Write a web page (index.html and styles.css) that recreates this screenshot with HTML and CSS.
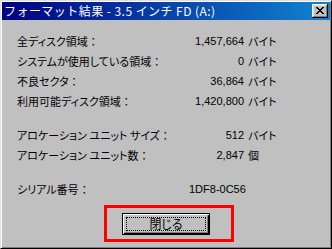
FILE: index.html
```html
<!DOCTYPE html>
<html lang="ja">
<head>
    <meta charset="UTF-8">
    <title>フォーマット結果</title>
    <link rel="stylesheet" href="styles.css">
</head>
<body>
    <div class="window">
        <div class="titlebar">
            <span class="title">フォーマット結果 - 3.5 インチ FD (A:)</span>
            <button class="close-btn" aria-label="閉じる">
                <svg width="8" height="7" viewBox="0 0 8 7">
                    <path d="M0 0h2v1h1v1h2v-1h1v-1h2v1h-1v1h-1v1h-1v1h1v1h1v1h1v1h-2v-1h-1v-1h-2v1h-1v1h-2v-1h1v-1h1v-1h1v-1h-1v-1h-1z" fill="#000"/>
                </svg>
            </button>
        </div>

        <div class="content">
            <div class="info-grid">
                <span class="label">全ディスク領域<span class="colon">：</span></span>
                <span class="num">1,457,664</span>
                <span class="unit">バイト</span>

                <span class="label">システムが使用している領域<span class="colon">：</span></span>
                <span class="num">0</span>
                <span class="unit">バイト</span>

                <span class="label">不良セクタ<span class="colon">：</span></span>
                <span class="num">36,864</span>
                <span class="unit">バイト</span>

                <span class="label">利用可能ディスク領域<span class="colon">：</span></span>
                <span class="num">1,420,800</span>
                <span class="unit">バイト</span>

                <span class="spacer"></span>

                <span class="label">アロケーション ユニット サイズ<span class="colon">：</span></span>
                <span class="num">512</span>
                <span class="unit">バイト</span>

                <span class="label">アロケーション ユニット数<span class="colon">：</span></span>
                <span class="num">2,847</span>
                <span class="unit">個</span>

                <span class="spacer"></span>

                <span class="label">シリアル番号<span class="colon">：</span></span>
                <span class="serial">1DF8-0C56</span>
            </div>

            <div class="footer">
                <div class="highlight">
                    <button class="ok-btn"><span class="focus">閉じる</span></button>
                </div>
            </div>
        </div>
    </div>
</body>
</html>
```

FILE: styles.css
```css
body {
    margin: 0;
    background: #c0c0c0;
    font-family: "Noto Sans CJK JP", "Liberation Sans", sans-serif;
    font-size: 11px;
    font-feature-settings: "palt";
    color: #000;
}

.window {
    width: 332px;
    height: 249px;
    box-sizing: border-box;
    background: #c0c0c0;
    border: 1px solid;
    border-color: #dfdfdf #000 #000 #dfdfdf;
    box-shadow: inset 1px 1px #fff, inset -1px -1px #808080;
    padding: 1px;
    display: flex;
    flex-direction: column;
    overflow: hidden;
}

.titlebar {
    height: 18px;
    flex: none;
    background: linear-gradient(to right, #000080, #1084d0);
    display: flex;
    align-items: center;
    justify-content: space-between;
    padding: 0 2px 0 2px;
}

.title {
    color: #fff;
    font-size: 12px;
    font-feature-settings: normal;
    line-height: 18px;
    white-space: nowrap;
    letter-spacing: 0.45px;
}

.close-btn {
    width: 16px;
    height: 14px;
    padding: 0;
    border: none;
    background: #c0c0c0;
    box-shadow: inset -1px -1px #000, inset 1px 1px #fff, inset -2px -2px #808080, inset 2px 2px #dfdfdf;
    display: flex;
    align-items: center;
    justify-content: center;
}

.close-btn svg {
    display: block;
    margin: 0 1px 1px 0;
}

.content {
    flex: 1;
    padding: 11px 0 0 15px;
    display: flex;
    flex-direction: column;
}

.info-grid {
    display: grid;
    grid-template-columns: 150px 73px auto;
    grid-template-rows: repeat(4, 20px) 14px 20px 20px 14px 20px;
    column-gap: 4px;
    align-items: center;
    white-space: nowrap;
}

.colon {
    font-feature-settings: normal;
}

.spacer {
    grid-column: 1 / 4;
}

.num {
    text-align: right;
    font-family: "Liberation Sans", sans-serif;
}

.serial {
    grid-column: 2 / 4;
    padding-left: 18px;
    font-family: "Liberation Sans", sans-serif;
}

.footer {
    display: flex;
    padding: 6px 0 0 87px;
}

.highlight {
    border: 3px solid #f00;
    padding: 5px 21px 4px 15px;
}

.ok-btn {
    width: 88px;
    height: 22px;
    padding: 3px;
    border: 1px solid #000;
    background: #c0c0c0;
    box-shadow: inset 1px 1px #fff, inset -1px -1px #000, inset -2px -2px #808080;
    font-family: inherit;
    font-size: 12px;
    font-feature-settings: "palt";
    color: #000;
    display: flex;
}

.focus {
    flex: 1;
    border: 1px dotted #000;
    display: flex;
    align-items: center;
    justify-content: center;
    line-height: 12px;
}
```
